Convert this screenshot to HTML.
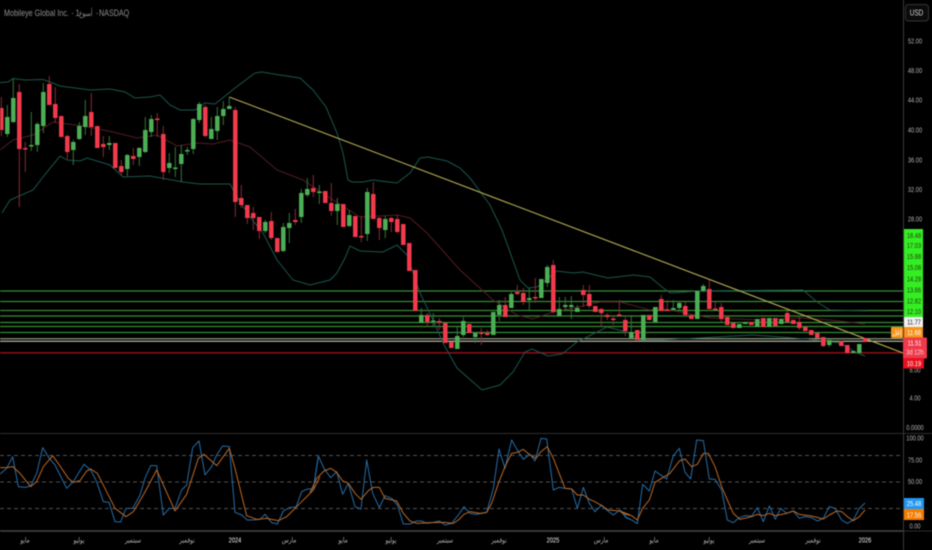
<!DOCTYPE html>
<html><head><meta charset="utf-8"><style>
html,body{margin:0;padding:0;background:#000;width:932px;height:550px;overflow:hidden}
svg{display:block;filter:blur(.4px)}
text{font-family:"Liberation Sans","DejaVu Sans",sans-serif;font-size:7.5px;fill:#b0b0b0;text-anchor:middle}
.d{fill:#1f3a12;font-weight:400}
.w{fill:#f4f4f4}
</style></head><body>
<svg width="932" height="550" viewBox="0 0 932 550" xmlns="http://www.w3.org/2000/svg">
<rect width="932" height="550" fill="#000"/>
<!-- horizontal levels -->
<g fill="none">
<path d="M0 291H903M0 301.5H903M0 310.5H903M0 316H903M0 322.5H903M0 326.5H903M0 332.5H903" stroke="#388a36" stroke-width="1.2"/>
<path d="M0 338.7H903" stroke="#a9bf8e" stroke-width="1"/>
<path d="M0 341.2H903" stroke="#e0d9cc" stroke-width="1"/>
<path d="M0 352.8H903" stroke="#850e16" stroke-width="1.7"/>
</g>
<!-- bollinger -->
<g fill="none" stroke-width="1">
<path stroke="#1a564d" d="M0 82.5L8 82L13 78.5L25 80L43 79.5L50 82L60 86L75 88L90 90L110 89L125 92L135 98L150 97L160 95L170 105L180 110L195 110L205 103L215 104L235 88L255 73L262 72L280 75L300 78L313 90L326 107L337 133L343 153L348 180L352 182L363 182L373 180L397 183L410 173L420 158L428 157L447 161L460 168L470 178L490 205L502 230L520 280L528 288L537 287L557 271L573 273L583 272L608 278L633 275L650 277L662 287L670 293L700 291L803 290L817 302L830 310L867 311"/>
<path stroke="#1a564d" d="M2 213L10 200L33 190L43 177L60 156L67 160L80 161L87 158L110 165L123 177L150 176L183 182L200 184L230 184L237 197L250 217L263 233L277 260L293 280L310 285L330 280L337 273L345 258L350 246L360 251L383 252L397 245L407 255L420 293L433 320L443 343L457 368L482 390L500 385L513 372L525 352L532 349L548 356L562 354L577 342L607 327L627 332L640 340L662 340L753 335L807 339L840 343L857 353L865 356"/>
<path stroke="#541c24" d="M0 150L13 140L33 135L53 122L83 126L113 132L137 138L157 135L177 146L197 143L213 144L230 140L250 147L277 170L303 180L330 198L360 217L397 215L410 218L427 233L460 270L493 300L517 315L533 319L553 312L583 306L600 302L620 302L650 310L660 308L680 312L710 318L760 320L800 318L830 320L865 324"/>
</g>
<!-- trend -->
<path d="M229.3 97L903 353" stroke="#b3ac52" stroke-width="1.1" fill="none"/>
<!-- wicks -->
<path fill="none" stroke="#8a2b36" stroke-width="1" d="M1.3 97V136M19.3 84V207M25.3 142V172M49.3 76V105M55.3 87V123M67.3 135V159M91.3 93V136M103.3 136V157M121.3 160V175M133.3 148V165M157.3 113V137M163.3 126V180M205.3 105V137M235.3 107V217M241.3 185V208M247.3 205V224M253.3 207V230M259.3 217V239M271.3 212V240M295.3 209V225M313.3 175V197M331.3 183V216M361.3 216V242M373.3 182V219M379.3 217V240M391.3 217V232M397.3 215V233M427.3 313V327M439.3 318V330M481.3 328V345M487.3 330V336M505.3 297V317M517.3 285V295M523.3 288V305M535.3 278V303M553.3 260V313M583.3 285V307M589.3 285V308M601.3 308V327M607.3 313V320M613.3 315V325M619.3 300V317M625.3 317V336M661.3 295V311M667.3 300V311M685.3 302V315M709.3 280V309M715.3 302V310M721.3 303V322M787.3 311V322M799.3 317V330M823.3 337V347"/>
<path fill="none" stroke="#35743a" stroke-width="1" d="M7.3 105V137M13.3 79V123M31.3 112V151M37.3 122V152M43.3 83V133M73.3 140V165M79.3 122V140M85.3 100V135M109.3 136V150M127.3 154V176M139.3 147V166M145.3 117V153M151.3 115V137M169.3 153V173M175.3 147V177M181.3 145V182M187.3 147V155M193.3 118V154M199.3 102V123M211.3 117V139M217.3 107V140M223.3 101V125M229.3 97V109M265.3 220V233M283.3 223V252M289.3 213V243M301.3 189V223M307.3 178V197M319.3 185V204M337.3 198V225M349.3 210V227M367.3 188V241M385.3 216V238M421.3 308V323M433.3 313V327M457.3 327V349M463.3 317V337M475.3 332V343M499.3 300V321M511.3 292V308M529.3 288V310M547.3 265V287M559.3 297V316M565.3 297V310M571.3 296V319M577.3 305V312M631.3 315V338M673.3 300V310M679.3 301V310M703.3 284V292M829.3 340V347"/>
<!-- bodies -->
<path fill="none" stroke="#f23a4c" stroke-width="4.5" d="M1.3 108V130M19.3 92V149M25.3 148V149.5M49.3 84V105M55.3 104V118M61.3 116V137M67.3 136V152M91.3 112V127M97.3 126V148M103.3 144V147M115.3 143V168M121.3 166V172M133.3 156V159M157.3 118.5V120M163.3 134V172M205.3 107V136M235.3 110V202M241.3 198V205M247.3 205V218M253.3 213V218M259.3 217V231M271.3 221V238M277.3 238V252M295.3 220V222M313.3 188V192M325.3 191V203M331.3 203V211M343.3 204V227M355.3 216V237M361.3 236V237.5M373.3 194V219M379.3 218V228M391.3 218V222M397.3 219V232M403.3 224V245M409.3 243V271M415.3 270V311M427.3 315V322M439.3 321V322.5M445.3 323V343M451.3 342V348M469.3 324V333M481.3 332.5V334M487.3 333V335M505.3 305V317M517.3 292V294M523.3 293V302M535.3 297V298.5M553.3 265V312M583.3 290V295M589.3 294V306M595.3 306V312M601.3 309V313M607.3 315V317M613.3 318.5V320M619.3 314.5V316M625.3 320V331M637.3 330V340M649.3 315V320M661.3 299V311M667.3 309.5V311M685.3 306V315M691.3 315V319M709.3 289V309M715.3 308.5V310M721.3 307V319M727.3 317V325M733.3 323V328M751.3 322V325M763.3 318V327M775.3 318V326M787.3 313V322M793.3 320V324M799.3 322V328M805.3 327V331M811.3 330V335M817.3 333V338M823.3 337V346M841.3 341V346M847.3 345V353M865.3 338V342"/>
<path fill="none" stroke="#4caf54" stroke-width="4.5" d="M7.3 117V134M13.3 98V122M31.3 145V146.5M37.3 124V145M43.3 92V126M73.3 142V150M79.3 126V139M85.3 116V127M109.3 143V145M127.3 155V169M139.3 148V157M145.3 130V152M151.3 119V132M169.3 163V168M175.3 167.5V169M181.3 154V164M187.3 150V151.5M193.3 119V149M199.3 104V120M211.3 129V139M217.3 116V131M223.3 109V116M229.3 106V109M265.3 222V231M283.3 227V251M289.3 223V228M301.3 193V217M307.3 189V195M319.3 191.5V193M337.3 204V211M349.3 215V226M367.3 192V234M385.3 219V230M421.3 315V323M433.3 320.5V322M457.3 336V349M463.3 321V335M475.3 333V337M493.3 312V335M499.3 305V315M511.3 294V308M529.3 298V300M541.3 279V298M547.3 267V283M559.3 309V316M565.3 305V307M571.3 305V307M577.3 308V312M631.3 332V338M643.3 315V340M655.3 307V322M673.3 308V310M679.3 303V308M697.3 291V319M703.3 286V291M739.3 324V328M745.3 322V324M757.3 319V327M769.3 318V327M781.3 319V324M829.3 340V345M835.3 340.5V342M853.3 351V353M859.3 344V353"/>
<!-- panes -->
<path d="M0 433.5H932" stroke="#2c2c2c" fill="none"/>
<path d="M0 531H903" stroke="#474747" stroke-width="1.6" fill="none"/>
<path d="M903 531H932" stroke="#2c2c2c" fill="none"/>
<path d="M0 455.5H903M0 482H903M0 508.5H903" stroke="#505050" stroke-width="1" stroke-dasharray="4 3" fill="none"/>
<path d="M903.5 0V550" stroke="#3a3a3a" fill="none"/>
<!-- RSI -->
<g fill="none" stroke-width="3" stroke-linejoin="round">
<g transform="translate(0 425) scale(.33333)">
<polyline stroke="#246da9" points="0,147 20,130 38,95 55,185 75,187 92,183 110,145 128,68 148,100 165,120 200,190 220,170 235,145 252,118 272,135 290,170 310,230 327,232 345,290 362,291 378,250 398,250 420,210 435,160 452,122 470,122 490,270 508,250 525,250 545,195 560,180 578,68 597,48 615,150 635,125 650,90 668,63 688,65 705,262 725,270 742,285 760,285 780,283 795,268 815,293 832,297 850,258 868,248 888,246 905,200 922,192 940,192 955,95"/>
<polyline stroke="#bc6826" points="0,128 20,128 38,125 60,145 92,185 110,170 130,125 158,92 178,120 205,160 220,172 240,167 260,138 272,132 292,145 320,200 345,250 378,275 400,260 430,210 470,135 525,258 560,208 595,100 612,88 650,122 688,70 705,130 740,272 770,283 800,280 835,287 860,275 900,235 940,195 960,155"/>
</g>
<g transform="translate(310 425) scale(.33333)">
<polyline stroke="#246da9" points="0,192 10,192 25,93 42,130 62,158 80,140 98,208 115,175 135,245 153,252 170,105 188,205 208,248 225,212 245,220 262,240 280,297 300,297 320,288 335,288 350,295 370,292 388,288 405,300 425,295 445,270 462,245 480,265 498,268 515,265 530,262 550,190 567,72 585,130 605,45 622,75 640,103 660,88 675,108 693,40 710,42 730,195 748,187 765,190 785,192 802,250 820,187 838,235 855,260 875,240 890,255 910,270 930,255 950,278 960,282"/>
<polyline stroke="#bc6826" points="0,203 20,160 42,138 62,130 80,142 98,168 115,175 135,205 153,223 175,197 190,187 208,187 225,220 260,228 280,265 300,288 320,295 360,293 405,292 430,295 445,285 462,268 480,260 510,265 530,262 545,235 567,170 585,125 605,85 622,82 640,73 660,90 678,100 693,80 712,65 730,100 765,190 785,192 802,210 820,210 838,223 855,230 875,242 895,255 930,258 960,270"/>
</g>
<g transform="translate(620 425) scale(.33333)">
<polyline stroke="#246da9" points="0,255 18,278 35,285 52,296 68,178 88,198 105,138 125,152 140,162 160,92 178,70 195,142 212,162 230,45 250,47 268,162 285,163 305,195 322,285 340,293 358,278 375,272 395,273 412,248 430,290 448,243 466,283 482,250 500,265 520,258 538,280 555,275 575,278 592,288 610,280 628,245 645,250 665,285 682,295 700,285 718,250 735,234"/>
<polyline stroke="#bc6826" points="0,260 18,268 35,272 52,285 68,250 88,225 105,172 125,160 150,145 178,108 195,102 215,125 232,118 250,85 265,85 285,125 305,185 322,225 340,265 360,283 395,275 412,268 430,272 448,265 466,272 500,265 520,258 538,268 575,273 610,282 628,270 650,258 665,260 682,275 700,287 718,275 735,255"/>
</g>
</g>
<!-- header -->
<text transform="translate(4 16) scale(.755 1)" style="text-anchor:start;font-size:9.5px;fill:#8f8f8f">Mobileye Global Inc.</text>
<text transform="translate(71 16)" style="text-anchor:start;font-size:9px;fill:#8f8f8f">·</text>
<text transform="translate(75.5 16) scale(.8 1)" style="text-anchor:start;font-size:9.5px;fill:#8f8f8f">1</text>
<text transform="translate(92.5 16) scale(.62 1)" style="text-anchor:end;font-size:8.5px;fill:#8f8f8f">أسبوع</text>
<text transform="translate(95.5 16)" style="text-anchor:start;font-size:9px;fill:#8f8f8f">·</text>
<text transform="translate(99 16) scale(.755 1)" style="text-anchor:start;font-size:9.5px;fill:#8f8f8f">NASDAQ</text>
<!-- USD -->
<rect x="905.5" y="4.5" width="23" height="16.5" rx="3" fill="#0b0b0b" stroke="#343434"/>
<text transform="translate(916.5 15.5) scale(.8 1)" class="w" style="fill:#d8d8d8;font-size:8px">USD</text>
<!-- axis labels -->
<text transform="translate(915 43.5) scale(.76 1)">52.00</text>
<text transform="translate(915 73) scale(.76 1)">48.00</text>
<text transform="translate(915 102.5) scale(.76 1)">44.00</text>
<text transform="translate(915 132.5) scale(.76 1)">40.00</text>
<text transform="translate(915 162.5) scale(.76 1)">36.00</text>
<text transform="translate(915 192) scale(.76 1)">32.00</text>
<text transform="translate(915 221.5) scale(.76 1)">28.00</text>
<text transform="translate(915 372.5) scale(.76 1)">8.00</text>
<text transform="translate(915 400.5) scale(.76 1)">4.00</text>
<text transform="translate(915 430) scale(.76 1)">0.0000</text>
<text transform="translate(915 440.5) scale(.76 1)">100.00</text>
<text transform="translate(915 462.5) scale(.76 1)">75.00</text>
<text transform="translate(915 484) scale(.76 1)">50.00</text>
<text transform="translate(915 528.5) scale(.76 1)">0.00</text>
<!-- price boxes -->
<rect x="904" y="229" width="19" height="88" fill="#33ee22"/>
<g class="d">
<text class="d" transform="translate(914 238) scale(.76 1)">18.48</text>
<text class="d" transform="translate(914 248) scale(.76 1)">17.03</text>
<text class="d" transform="translate(914 259) scale(.76 1)">15.88</text>
<text class="d" transform="translate(914 270) scale(.76 1)">15.08</text>
<text class="d" transform="translate(914 281.5) scale(.76 1)">14.28</text>
<text class="d" transform="translate(914 292.5) scale(.76 1)">13.66</text>
<text class="d" transform="translate(914 303.5) scale(.76 1)">12.82</text>
<text class="d" transform="translate(914 314) scale(.76 1)">12.10</text>
</g>
<rect x="904" y="317" width="19" height="10" fill="#f2f2f2"/>
<text transform="translate(914 324.5) scale(.76 1)" style="fill:#222">11.77</text>
<rect x="891" y="327" width="12" height="11" rx="1" fill="#f7931a"/>
<rect x="904" y="327" width="19" height="10.5" fill="#f7931a"/>
<text transform="translate(897 335) scale(.8 1)" style="fill:#fff">إغل</text>
<text transform="translate(914 335) scale(.76 1)" style="fill:#fff">11.68</text>
<rect x="903" y="337.5" width="24" height="21" rx="1" fill="#ee3a4c"/>
<text transform="translate(914.5 345.5) scale(.76 1)" style="fill:#fff">11.51</text>
<text transform="translate(915 354.5) scale(.76 1)" style="fill:#fbd0d4">3d 12h</text>
<rect x="903" y="358" width="21" height="10.5" fill="#e8101e"/>
<text transform="translate(914 366) scale(.76 1)" style="fill:#fff">10.19</text>
<rect x="904" y="498" width="20" height="11" fill="#2196f3"/>
<text transform="translate(914 506) scale(.76 1)" style="fill:#fff">25.48</text>
<rect x="904" y="509" width="20" height="11" fill="#f57c00"/>
<text transform="translate(914 517.5) scale(.76 1)" style="fill:#fff">17.56</text>
<!-- time axis -->
<g>
<text transform="translate(25 542.5) scale(.76 1)">مايو</text>
<text transform="translate(79 542.5) scale(.76 1)">يوليو</text>
<text transform="translate(133 542.5) scale(.76 1)">سبتمبر</text>
<text transform="translate(187 542.5) scale(.76 1)">نوفمبر</text>
<text transform="translate(235 542.5) scale(.76 1)" class="w">2024</text>
<text transform="translate(289 542.5) scale(.76 1)">مارس</text>
<text transform="translate(343 542.5) scale(.76 1)">مايو</text>
<text transform="translate(391 542.5) scale(.76 1)">يوليو</text>
<text transform="translate(445 542.5) scale(.76 1)">سبتمبر</text>
<text transform="translate(499 542.5) scale(.76 1)">نوفمبر</text>
<text transform="translate(553 542.5) scale(.76 1)" class="w">2025</text>
<text transform="translate(601 542.5) scale(.76 1)">مارس</text>
<text transform="translate(654 542.5) scale(.76 1)">مايو</text>
<text transform="translate(709 542.5) scale(.76 1)">يوليو</text>
<text transform="translate(757 542.5) scale(.76 1)">سبتمبر</text>
<text transform="translate(813 542.5) scale(.76 1)">نوفمبر</text>
<text transform="translate(865 542.5) scale(.76 1)" class="w">2026</text>
</g>
</svg>
</body></html>
